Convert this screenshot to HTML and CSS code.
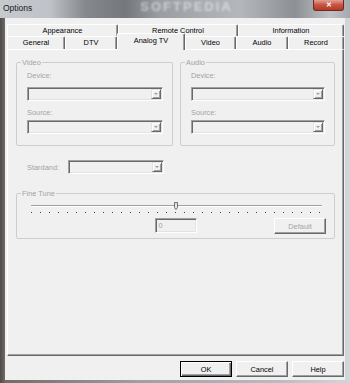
FILE: index.html
```html
<!DOCTYPE html>
<html lang="en">
<head>
  <meta charset="UTF-8">
  <title>Options</title>
  <link rel="stylesheet" href="styles.css">
</head>
<body>

  <div class="window">
    <div class="titlebar">
      <span class="title">Options</span>
      <span class="watermark">SOFTPEDIA</span>
      <span class="close">&#x2715;</span>
    </div>

    <div class="client">
      <!-- two rows of tabs, the front row holds the selected one -->
      <div class="tabs">
        <div class="tab-row back">
          <div class="tab tab-appearance">Appearance</div>
          <div class="tab tab-remote">Remote Control</div>
          <div class="tab tab-info">Information</div>
        </div>
        <div class="tab-row front">
          <div class="tab tab-general">General</div>
          <div class="tab tab-dtv">DTV</div>
          <div class="tab tab-analog active">Analog TV</div>
          <div class="tab tab-video">Video</div>
          <div class="tab tab-audio">Audio</div>
          <div class="tab tab-record">Record</div>
        </div>
      </div>

      <div class="panel">
        <div class="groups">
          <fieldset class="group">
            <legend>Video</legend>
            <div class="group-body">
              <div class="label">Device:</div>
              <div class="combo"><span class="drop"></span></div>
              <div class="label">Source:</div>
              <div class="combo"><span class="drop"></span></div>
            </div>
          </fieldset>
          <fieldset class="group">
            <legend>Audio</legend>
            <div class="group-body">
              <div class="label">Device:</div>
              <div class="combo"><span class="drop"></span></div>
              <div class="label">Source:</div>
              <div class="combo"><span class="drop"></span></div>
            </div>
          </fieldset>
        </div>

        <div class="standard">
          <span class="label">Stardand:</span>
          <div class="combo"><span class="drop"></span></div>
        </div>

        <fieldset class="group fine">
          <legend>Fine Tune</legend>
          <div class="track">
            <div class="channel"></div>
            <svg class="thumb" width="4" height="8" viewBox="0 0 4 8">
              <path d="M0.5 0.5 H3.5 V5.5 L2 7.5 L0.5 5.5 Z" fill="#e6e6e6" stroke="#6f6f6f" stroke-width="1"/>
            </svg>
            <div class="ticks"></div>
          </div>
          <div class="tune-row">
            <div class="edit">0</div>
            <button class="btn btn-default" disabled>Default</button>
          </div>
        </fieldset>
      </div>

      <div class="actions">
        <button class="btn ok">OK</button>
        <button class="btn">Cancel</button>
        <button class="btn">Help</button>
      </div>
    </div>
  </div>

</body>
</html>
```

FILE: styles.css
```css
* {
  box-sizing: border-box;
}
body {
  margin: 0;
  font-family: "Liberation Sans", Arial, sans-serif;
  font-size: 7.4px;
  color: #000;
}
.window {
  width: 350px;
  height: 383px;
  overflow: hidden;
  display: flex;
  flex-direction: column;
  background: linear-gradient(90deg, #4f4b46 0, #6e6c68 5px, #9ca1a6 40%, #b9bdc1 80%, #d3d6d9 100%);
}

/* glass title bar */
.titlebar {
  height: 18px;
  flex: none;
  display: flex;
  align-items: flex-start;
  background: linear-gradient(90deg, #c6c9cd 0, #bfc2c6 50px, #85888c 85px, #74777b 125px, #9a9ea2 160px, #b4b8bc 240px, #8c9095 295px, #bfc3c7 330px, #a5a9ad 350px);
}
.title {
  padding: 3px 0 0 3px;
  font-size: 8.5px;
  color: #1b1b1b;
}
.watermark {
  margin: 0 0 0 108px;
  font-size: 13px;
  line-height: 13px;
  font-weight: bold;
  letter-spacing: 2px;
  color: rgba(255, 255, 255, 0.5);
  filter: blur(0.8px);
}
.close {
  margin-left: auto;
  margin-right: 6px;
  width: 31px;
  height: 11px;
  border: 1px solid #6b2a20;
  border-top: none;
  border-radius: 0 0 3px 3px;
  background: linear-gradient(#e2a093, #c9513e 50%, #b53a27);
  color: #fff;
  font-size: 7px;
  font-weight: bold;
  line-height: 9px;
  text-align: center;
}

.client {
  height: 362px;
  margin: 0 5px;
  padding: 6px 1px 0 2px;
  background: #f0f0f0;
}

/* tabs */
.tabs {
  display: flex;
  flex-direction: column;
}
.tab-row {
  display: flex;
}
.tab {
  border: 1px solid;
  border-color: #fff #696969 transparent #fff;
  border-bottom: none;
  border-radius: 2px 2px 0 0;
  box-shadow: inset -1px 0 0 #a0a0a0;
  background: #f0f0f0;
  text-align: center;
  white-space: nowrap;
}
.back .tab {
  height: 12px;
  line-height: 11px;
}
.front .tab {
  height: 13px;
  line-height: 12px;
}
.front .tab.active {
  height: 17px;
  margin: -3px 0 -1px;
  line-height: 14px;
  z-index: 1;
}
.tab-appearance { width: 111px; }
.tab-remote { width: 120px; }
.tab-info { width: 106px; }
.tab-general { width: 58px; }
.tab-dtv { width: 52px; }
.tab-analog { width: 68px; }
.tab-video { width: 51px; }
.tab-audio { width: 52px; }
.tab-record { width: 56px; }

.panel {
  height: 307px;
  padding: 8px 8px 0;
  border: 1px solid;
  border-color: #fff #696969 #696969 #fff;
  box-shadow: inset -1px -1px 0 #a0a0a0;
}

/* group boxes */
.groups {
  display: grid;
  grid-template-columns: 157px 155px;
  column-gap: 7px;
}
.group {
  margin: 0;
  min-width: 0;
  padding: 4px 9px 11px 4px;
  border: 1px solid #cdcdcd;
  border-radius: 2px;
}
.group legend {
  padding: 0 1px;
  line-height: 9px;
  color: #a3a3a3;
}
.group-body {
  padding-left: 6px;
}
.label {
  height: 9px;
  line-height: 9px;
  color: #a3a3a3;
}
.group-body .combo {
  margin: 7px 0;
}
.group-body .combo + .label {
  margin-bottom: -4px;
}
.group-body .combo:last-child {
  margin-bottom: 0;
}

/* disabled combo box */
.combo {
  height: 14px;
  padding: 1px;
  display: flex;
  justify-content: flex-end;
  border: 1px solid;
  border-color: #a0a0a0 #fff #fff #a0a0a0;
  box-shadow: inset 1px 1px 0 #696969, inset -1px -1px 0 #e3e3e3;
  background: #f0f0f0;
}
.drop {
  width: 10px;
  height: 10px;
  display: flex;
  align-items: center;
  justify-content: center;
  border: 1px solid;
  border-color: #e3e3e3 #696969 #696969 #e3e3e3;
  box-shadow: inset 1px 1px 0 #fff, inset -1px -1px 0 #a0a0a0;
}
.drop::after {
  content: "";
  border-top: 2px solid #a0a0a0;
  border-left: 2px solid transparent;
  border-right: 2px solid transparent;
}

.standard {
  margin: 14px 0 0 11px;
  display: flex;
  align-items: center;
}
.standard .label {
  width: 41px;
}
.standard .combo {
  width: 96px;
}

/* fine tune */
.group.fine {
  margin-top: 15px;
  padding: 0 8px 4px 4px;
}
.track {
  position: relative;
  margin: 0 4px 0 10px;
  padding-top: 7px;
}
.channel {
  height: 2px;
  border-top: 1px solid #a0a0a0;
  border-bottom: 1px solid #fff;
}
.thumb {
  position: absolute;
  left: 143px;
  top: 4px;
}
.ticks {
  height: 1px;
  margin-top: 5px;
  background: repeating-linear-gradient(90deg, #404040 0 1px, transparent 1px 9px);
}
.tune-row {
  margin-top: 5px;
  padding-left: 4px;
  display: grid;
  grid-template-columns: 1fr 42px 1fr;
  align-items: start;
}
.edit {
  grid-column: 2;
  height: 15px;
  padding: 2px 3px;
  line-height: 10px;
  color: #a3a3a3;
  border: 1px solid;
  border-color: #a0a0a0 #fff #fff #a0a0a0;
  box-shadow: inset 1px 1px 0 #696969, inset -1px -1px 0 #e3e3e3;
}

/* classic push buttons */
.btn {
  width: 52px;
  height: 16px;
  padding: 0;
  font: inherit;
  color: #000;
  background: #f0f0f0;
  border: 1px solid;
  border-color: #fff #696969 #696969 #fff;
  box-shadow: inset -1px -1px 0 #a0a0a0;
}
.btn-default {
  justify-self: end;
  color: #a3a3a3;
}
.btn.ok {
  border-color: #000;
  box-shadow: inset 1px 1px 0 #fff, inset -1px -1px 0 #696969, inset -2px -2px 0 #a0a0a0;
}
.actions {
  margin-top: 5px;
  display: flex;
  justify-content: flex-end;
  gap: 4px;
}
```
